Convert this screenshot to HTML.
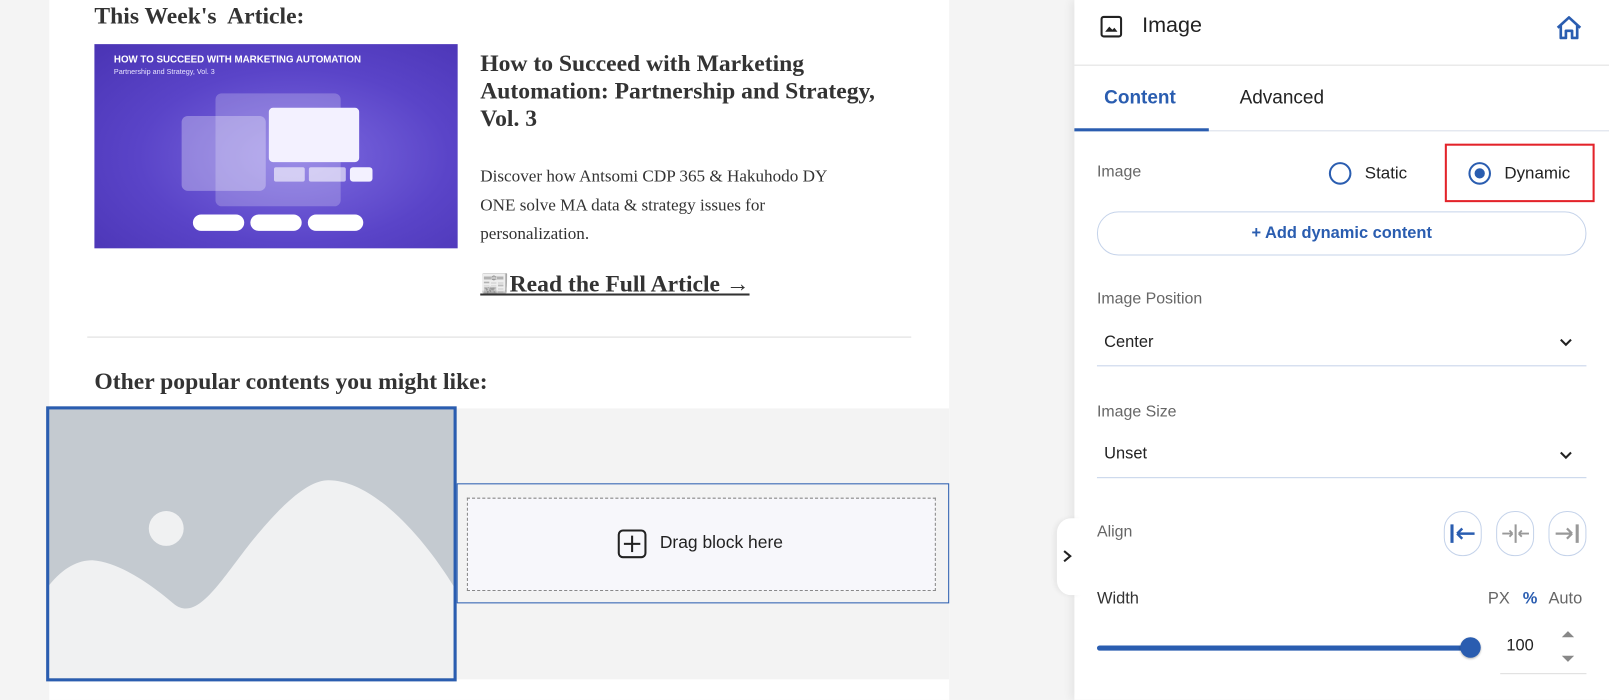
<!DOCTYPE html>
<html><head><meta charset="utf-8"><style>
*{box-sizing:border-box;margin:0;padding:0}
html,body{width:1609px;height:700px;overflow:hidden;background:#f4f4f4}
#w{position:absolute;left:0;top:0;width:1568px;height:682px;transform:scale(1.02615);transform-origin:0 0;background:#f4f4f4;font-family:"Liberation Sans",sans-serif}
.a{position:absolute}
.serif{font-family:"Liberation Serif",serif;color:#333}
.lbl{font-size:15.5px;color:#666}
.val{font-size:16px;color:#222}
</style></head><body><div id="w">
<div class="a" style="left:48px;top:0;width:877px;height:682px;background:#fff"></div>
<div class="a serif" style="left:92px;top:3px;font-size:23px;font-weight:bold;white-space:pre">This Week's  Article:</div>
<div class="a" style="left:92px;top:43px;width:354px;height:199px;background:radial-gradient(ellipse at 55% 55%,#7d6be0 0%,#5a44c8 55%,#4a34b4 100%);overflow:hidden">
 <div class="a" style="left:19px;top:10px;color:#fff;font-size:9.5px;font-weight:bold;white-space:nowrap">HOW TO SUCCEED WITH MARKETING AUTOMATION</div>
 <div class="a" style="left:19px;top:24px;color:#e8e4ff;font-size:7px;white-space:nowrap">Partnership and Strategy, Vol. 3</div>
 <div class="a" style="left:118px;top:48px;width:122px;height:110px;background:rgba(255,255,255,.22);border-radius:6px"></div>
 <div class="a" style="left:85px;top:70px;width:82px;height:73px;background:rgba(255,255,255,.3);border-radius:6px"></div>
 <div class="a" style="left:170px;top:62px;width:88px;height:53px;background:#f3f1ff;border-radius:4px"></div>
 <div class="a" style="left:175px;top:120px;width:30px;height:14px;background:rgba(255,255,255,.6);border-radius:2px"></div>
 <div class="a" style="left:209px;top:120px;width:36px;height:14px;background:rgba(255,255,255,.6);border-radius:2px"></div>
 <div class="a" style="left:249px;top:120px;width:22px;height:14px;background:#f3f1ff;border-radius:3px"></div>
 <div class="a" style="left:96px;top:166px;width:50px;height:16px;background:#fff;border-radius:8px"></div>
 <div class="a" style="left:152px;top:166px;width:50px;height:16px;background:#fff;border-radius:8px"></div>
 <div class="a" style="left:208px;top:166px;width:54px;height:16px;background:#fff;border-radius:8px"></div>
</div>
<div class="a serif" style="left:468px;top:48px;font-size:23px;font-weight:bold;line-height:27px;width:440px">How to Succeed with Marketing<br>Automation: Partnership and Strategy,<br>Vol. 3</div>
<div class="a serif" style="left:468px;top:158px;font-size:16.7px;line-height:28px">Discover how Antsomi CDP 365 &amp; Hakuhodo DY<br>ONE solve MA data &amp; strategy issues for<br>personalization.</div>
<div class="a serif" style="left:468px;top:263px;font-size:23px;font-weight:bold;text-decoration:underline;white-space:nowrap">📰Read the Full Article →</div>
<div class="a" style="left:85px;top:328px;width:803px;height:1px;background:#ddd"></div>
<div class="a serif" style="left:92px;top:359px;font-size:23px;font-weight:bold">Other popular contents you might like:</div>
<div class="a" style="left:48px;top:398px;width:877px;height:264px;background:#f3f3f3"></div>
<div class="a" style="left:45px;top:396px;width:400px;height:268px;border:3px solid #2a5db0;background:#c4cad0;overflow:hidden">
 <svg width="394" height="262" viewBox="3 3 394 262" style="display:block"><path d="M0 178 C15 158 30 150 45 150 C75 152 110 180 125 193 C150 212 175 160 210 120 C240 85 260 72 275 72 C320 72 370 130 400 180 L400 270 L0 270Z" fill="#f0f1f2"/><circle cx="117" cy="119" r="17" fill="#f0f1f2"/></svg>
</div>
<div class="a" style="left:445px;top:471px;width:480px;height:117px;border:1px solid #2a5db0;background:#f3f3f3"></div>
<div class="a" style="left:455px;top:485px;width:457px;height:91px;border:1px dashed #888;background:#f7f7fb"></div>
<div class="a" style="left:602px;top:516px;width:28px;height:28px;border:2px solid #222;border-radius:5px"></div>
<div class="a" style="left:608px;top:529px;width:16px;height:2px;background:#222"></div>
<div class="a" style="left:615px;top:522px;width:2px;height:16px;background:#222"></div>
<div class="a" style="left:643px;top:519px;font-size:17px;color:#222">Drag block here</div>

<div class="a" style="left:1047px;top:0;width:521px;height:682px;background:#fff;box-shadow:-4px 0 8px rgba(0,0,0,.06)"></div>
<div class="a" style="left:1030px;top:505px;width:24px;height:75px;background:#fff;border-radius:14px 0 0 14px;box-shadow:-3px 0 4px rgba(0,0,0,.05)"></div>
<svg class="a" style="left:1034px;top:535px" width="12" height="14"><path d="M3 2 L9 7 L3 12" fill="none" stroke="#222" stroke-width="2"/></svg>
<svg class="a" style="left:1072px;top:15px" width="22" height="22"><rect x="1.5" y="1.5" width="19" height="19" rx="2" fill="none" stroke="#222" stroke-width="2"/><path d="M5 16 L9 11 L12 14 L14 12 L17 16Z" fill="#222"/></svg>
<div class="a" style="left:1113px;top:13px;font-size:21px;color:#222">Image</div>
<svg class="a" style="left:1515px;top:14px" width="28" height="26"><path d="M3 13 L14 3 L25 13 M6 11 V23 H11 V16 H17 V23 H22 V11" fill="none" stroke="#2a5db0" stroke-width="2.6" stroke-linejoin="round"/></svg>
<div class="a" style="left:1047px;top:63px;width:521px;height:1px;background:#e0e0e0"></div>
<div class="a" style="left:1076px;top:84px;font-size:18.5px;font-weight:bold;color:#2a5db0">Content</div>
<div class="a" style="left:1208px;top:84px;font-size:18.5px;color:#222">Advanced</div>
<div class="a" style="left:1047px;top:127px;width:521px;height:1px;background:#d8dee8"></div>
<div class="a" style="left:1047px;top:125px;width:131px;height:3px;background:#2a5db0"></div>
<div class="a lbl" style="left:1069px;top:159px">Image</div>
<div class="a" style="left:1295px;top:158px;width:22px;height:22px;border:2.5px solid #2a5db0;border-radius:50%"></div>
<div class="a val" style="left:1330px;top:160px;font-size:16.5px">Static</div>
<div class="a" style="left:1408px;top:140px;width:146px;height:57px;border:2px solid #e3232a"></div>
<div class="a" style="left:1431px;top:158px;width:22px;height:22px;border:2.5px solid #2a5db0;border-radius:50%"></div>
<div class="a" style="left:1437px;top:164px;width:10px;height:10px;background:#2a5db0;border-radius:50%"></div>
<div class="a val" style="left:1466px;top:160px;font-size:16.5px">Dynamic</div>
<div class="a" style="left:1069px;top:206px;width:477px;height:43px;border:1px solid #c5d3ea;border-radius:21px;text-align:center;line-height:41px;font-size:16px;font-weight:bold;color:#2a5db0">+ Add dynamic content</div>
<div class="a lbl" style="left:1069px;top:283px">Image Position</div>
<div class="a val" style="left:1076px;top:325px">Center</div>
<svg class="a" style="left:1519px;top:329px" width="14" height="10"><path d="M2 2 L7 7 L12 2" fill="none" stroke="#222" stroke-width="2"/></svg>
<div class="a" style="left:1069px;top:356px;width:477px;height:1px;background:#c5d3ea"></div>
<div class="a lbl" style="left:1069px;top:393px">Image Size</div>
<div class="a val" style="left:1076px;top:434px">Unset</div>
<svg class="a" style="left:1519px;top:439px" width="14" height="10"><path d="M2 2 L7 7 L12 2" fill="none" stroke="#222" stroke-width="2"/></svg>
<div class="a" style="left:1069px;top:465px;width:477px;height:1px;background:#c5d3ea"></div>
<div class="a lbl" style="left:1069px;top:510px">Align</div>
<div class="a" style="left:1407px;top:498px;width:37px;height:44px;border:1px solid #c5d3ea;border-radius:18px"></div>
<div class="a" style="left:1458px;top:498px;width:37px;height:44px;border:1px solid #c5d3ea;border-radius:18px"></div>
<div class="a" style="left:1509px;top:498px;width:37px;height:44px;border:1px solid #c5d3ea;border-radius:18px"></div>
<svg class="a" style="left:1413px;top:510px" width="26" height="20"><path d="M2 1 V19" stroke="#2a5db0" stroke-width="3"/><path d="M7 10 H24 M7 10 L12 5 M7 10 L12 15" fill="none" stroke="#2a5db0" stroke-width="2.4"/></svg>
<svg class="a" style="left:1463px;top:510px" width="28" height="20"><path d="M14 1 V19" stroke="#999" stroke-width="2"/><path d="M1 10 H11 M11 10 L8 7 M11 10 L8 13 M27 10 H17 M17 10 L20 7 M17 10 L20 13" fill="none" stroke="#999" stroke-width="1.8"/></svg>
<svg class="a" style="left:1514px;top:510px" width="26" height="20"><path d="M23 1 V19" stroke="#999" stroke-width="3"/><path d="M2 10 H18 M18 10 L13 5 M18 10 L13 15" fill="none" stroke="#999" stroke-width="2.2"/></svg>
<div class="a val" style="left:1069px;top:575px;color:#333">Width</div>
<div class="a val" style="left:1450px;top:575px;color:#666">PX</div>
<div class="a val" style="left:1484px;top:575px;color:#2a5db0;font-weight:bold">%</div>
<div class="a val" style="left:1509px;top:575px;color:#666">Auto</div>
<div class="a" style="left:1069px;top:629px;width:366px;height:5px;background:#2a5db0;border-radius:3px"></div>
<div class="a" style="left:1423px;top:621px;width:20px;height:20px;background:#2a5db0;border-radius:50%;box-shadow:0 1px 2px rgba(0,0,0,.3)"></div>
<div class="a val" style="left:1468px;top:621px">100</div>
<svg class="a" style="left:1521px;top:613px" width="14" height="34"><path d="M1 8 L7 2 L13 8Z M1 26 L13 26 L7 32Z" fill="#888"/></svg>
<div class="a" style="left:1462px;top:656px;width:84px;height:1px;background:#ddd"></div>
</div></body></html>
